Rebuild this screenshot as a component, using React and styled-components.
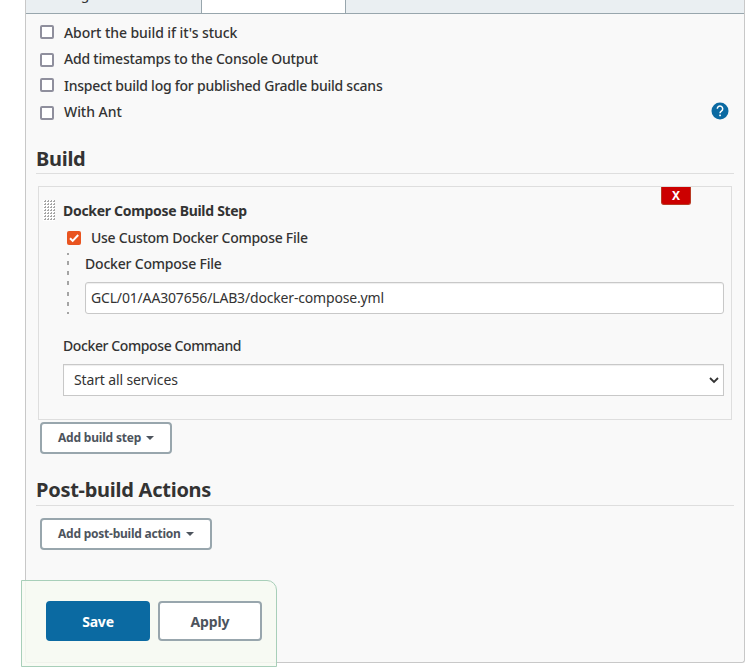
import React from 'react';
import styled, { createGlobalStyle } from 'styled-components';

const GlobalStyle = createGlobalStyle`
  * { box-sizing: border-box; }
  body {
    margin: 0;
    background: #fff;
    color: #333;
    font: 500 14px/26px "Noto Sans", "Open Sans", sans-serif;
  }
  button, input { font-family: inherit; }
`;

const Page = styled.div`
  position: relative;
  width: 748px;
  height: 671px;
  overflow: hidden;
`;

const Panel = styled.main`
  width: 720px;
  height: 663px;
  margin-left: 25px;
  background: #f9f9f9;
  border: 1px solid #c8c8c8;
  border-top: 0;
  border-radius: 0 0 3px 3px;
`;

const TabBar = styled.nav`
  display: flex;
  height: 14px;
  overflow: hidden;
  background: #eaeff2;
  border-bottom: 1px solid #98a6ad;
`;

const Tab = styled.div`
  width: ${p => p.$width}px;
  height: 13px;
  display: flex;
  align-items: flex-end;
  justify-content: center;
  background: ${p => (p.$active ? '#fff' : 'transparent')};
  border-right: 1px solid #98a6ad;
  font-weight: 400;
  line-height: 16px;
  padding: 0 57px 11px 0;
`;

const Content = styled.div`
  padding: 6px 10px 0;
`;

const OptionRow = styled.label`
  display: flex;
  align-items: flex-start;
  height: ${p => p.$height}px;
  padding-left: 4px;
`;

const Box = styled.span`
  flex: none;
  width: 14px;
  height: 14px;
  margin: ${p => p.$drop}px 10px 0 0;
  border: 2px solid #8f8f9d;
  border-radius: 2px;
  background: #fff;
`;

const Text = styled.span`
  letter-spacing: ${p => p.$track || 0}px;
  white-space: nowrap;
`;

const Help = styled.svg`
  width: 18px;
  height: 18px;
  margin: 3px 5px 0 auto;
`;

const SectionTitle = styled.h2`
  margin: ${p => p.$gap}px 0 12px;
  width: 698px;
  height: ${p => p.$height}px;
  border-bottom: 1px solid #dedede;
  font-size: 20px;
  font-weight: 700;
  line-height: 24px;
`;

const StepCard = styled.section`
  position: relative;
  width: 694px;
  height: 234px;
  margin-left: 2px;
  padding: 11px 7px 0 5px;
  border: 1px solid #dedede;
`;

const DeleteButton = styled.button`
  position: absolute;
  top: 0;
  right: 40px;
  width: 30px;
  height: 18px;
  padding: 0;
  border: 1px solid #b83a24;
  border-top: 0;
  border-radius: 0 0 3px 3px;
  background: #c00;
  color: #fff;
  font-size: 12px;
  font-weight: 700;
  line-height: 17px;
`;

const StepHeader = styled.header`
  display: flex;
  height: 27px;
  font-weight: 700;
`;

const Grip = styled.svg`
  width: 12px;
  height: 21px;
  margin: 2px 8px 0 -1px;
`;

const StepBody = styled.div`
  padding-left: 19px;
`;

const CheckRow = styled.label`
  display: flex;
  height: 27px;
  padding-left: 4px;
`;

const Tick = styled.svg`
  width: 14px;
  height: 14px;
  margin: 6px 10px 0 0;
`;

const Nested = styled.div`
  display: flex;
  height: 62px;
  margin-left: 4px;
`;

const Dashes = styled.svg`
  width: 2px;
  height: 61px;
  margin: 1px 16px 0 0;
`;

const Field = styled.div`
  flex: 1;
`;

const FieldLabel = styled.div`
  height: ${p => p.$height}px;
  line-height: ${p => p.$line || 26}px;
`;

const TextInput = styled.div`
  height: 32px;
  padding: 2px 5px;
  border: 1px solid #c8c8c8;
  border-radius: 3px;
  background: #fff;
  box-shadow: inset 0 1px 1px rgba(0, 0, 0, 0.07);
  font-weight: 400;
`;

const SelectBox = styled(TextInput)`
  display: flex;
  justify-content: space-between;
  padding: 2px 4px 2px 10px;
  border-radius: 0;
`;

const Chevron = styled.svg`
  width: 10px;
  height: 8px;
  margin-top: 9px;
`;

const CommandField = styled.div`
  margin-top: 19px;
`;

const OutlineButton = styled.button`
  display: flex;
  align-items: center;
  gap: 5px;
  width: ${p => p.$width}px;
  height: 32px;
  margin: ${p => p.$gap}px 0 0 4px;
  padding: 0 0 1px 16px;
  border: 2px solid #98a6ad;
  border-radius: 4px;
  background: #fff;
  color: #4d545d;
  font-size: 12px;
  font-weight: 700;
`;

const Caret = styled.svg`
  width: 8px;
  height: 4px;
  margin-top: 1px;
`;

const ActionBar = styled.footer`
  position: absolute;
  left: 21px;
  top: 580px;
  display: flex;
  gap: 8px;
  width: 256px;
  height: 87px;
  padding: 20px 0 0 24px;
  border: 1px solid #a8cfb9;
  border-radius: 0 10px 0 0;
  background: rgba(247, 250, 242, 0.85);
`;

const ActionButton = styled.button`
  width: 104px;
  height: 40px;
  padding: 1px 0 0;
  border: 2px solid ${p => (p.$primary ? '#0b6aa2' : '#98a6ad')};
  border-radius: 4px;
  background: ${p => (p.$primary ? '#0b6aa2' : '#fff')};
  color: ${p => (p.$primary ? '#fff' : '#4d545d')};
  font-size: 14px;
  font-weight: 700;
`;

const OPTIONS = [
  { label: "Abort the build if it's stuck", track: -0.07, height: 26, drop: 5 },
  { label: 'Add timestamps to the Console Output', track: -0.21, height: 27, drop: 7 },
  { label: 'Inspect build log for published Gradle build scans', track: -0.24, height: 26, drop: 5 },
  { label: 'With Ant', track: -0.04, height: 26, drop: 7, help: true },
];

const GRIP_DOTS = Array.from({ length: 28 }, (_, i) => [1 + (i % 4) * 3, 1 + Math.floor(i / 4) * 3]);

const DownCaret = () => (
  <Caret viewBox="0 0 8 4"><path d="M0 0h8L4 4z" fill="#4d545d" /></Caret>
);

export default function App() {
  return (
    <Page>
      <GlobalStyle />
      <Panel>
        <TabBar>
          <Tab $width={176}>g</Tab>
          <Tab $width={144} $active />
        </TabBar>
        <Content>
          {OPTIONS.map(o => (
            <OptionRow key={o.label} $height={o.height}>
              <Box $drop={o.drop} />
              <Text $track={o.track}>{o.label}</Text>
              {o.help && (
                <Help viewBox="0 0 18 18">
                  <circle cx="9" cy="9" r="8.5" fill="#0b6aa2" />
                  <path d="M6.3 6.8a2.7 2.7 0 1 1 4.1 2.3C9.4 9.8 9 10.1 9 11.3" fill="none" stroke="#fff" strokeWidth="1.5" />
                  <rect x="8.2" y="12.6" width="1.7" height="1.6" fill="#fff" />
                </Help>
              )}
            </OptionRow>
          ))}
          <SectionTitle $gap={22} $height={27}><Text $track={-0.3}>Build</Text></SectionTitle>
          <StepCard>
            <DeleteButton>X</DeleteButton>
            <StepHeader>
              <Grip viewBox="0 0 12 21">
                <rect width="12" height="21" fill="#fff" />
                {GRIP_DOTS.map(([x, y]) => (
                  <path key={`${x}-${y}`} d={`M${x} ${y + 1}v-1h1v-1h1v2z`} fill="#a5a5a5" />
                ))}
              </Grip>
              <Text $track={-0.3}>Docker Compose Build Step</Text>
            </StepHeader>
            <StepBody>
              <CheckRow>
                <Tick viewBox="0 0 14 14">
                  <rect width="14" height="14" rx="2" fill="#e95420" />
                  <path d="M3 7.2l2.7 2.7L11.2 4" fill="none" stroke="#fff" strokeWidth="2" />
                </Tick>
                <Text $track={-0.26}>Use Custom Docker Compose File</Text>
              </CheckRow>
              <Nested>
                <Dashes viewBox="0 0 2 61">
                  <path d="M1 0v2M1 8v4M1 18v4M1 28v4M1 39v4M1 49v4M1 59v2" stroke="#a5a5a5" strokeWidth="2" />
                </Dashes>
                <Field>
                  <FieldLabel $height={30} $line={24}><Text $track={-0.2}>Docker Compose File</Text></FieldLabel>
                  <TextInput><Text $track={-0.17}>GCL/01/AA307656/LAB3/docker-compose.yml</Text></TextInput>
                </Field>
              </Nested>
              <CommandField>
                <FieldLabel $height={31}><Text $track={-0.4}>Docker Compose Command</Text></FieldLabel>
                <SelectBox>
                  <Text $track={-0.14}>Start all services</Text>
                  <Chevron viewBox="0 0 10 8">
                    <path d="M1 2l4 4 4-4" fill="none" stroke="#333" strokeWidth="1.8" />
                  </Chevron>
                </SelectBox>
              </CommandField>
            </StepBody>
          </StepCard>
          <OutlineButton $width={132} $gap={2}>
            <Text $track={-0.19}>Add build step</Text><DownCaret />
          </OutlineButton>
          <SectionTitle $gap={24} $height={28}><Text $track={-0.26}>Post-build Actions</Text></SectionTitle>
          <OutlineButton $width={172} $gap={12}>
            <Text $track={-0.23}>Add post-build action</Text><DownCaret />
          </OutlineButton>
        </Content>
      </Panel>
      <ActionBar>
        <ActionButton $primary><Text $track={-0.2}>Save</Text></ActionButton>
        <ActionButton><Text $track={-0.1}>Apply</Text></ActionButton>
      </ActionBar>
    </Page>
  );
}
